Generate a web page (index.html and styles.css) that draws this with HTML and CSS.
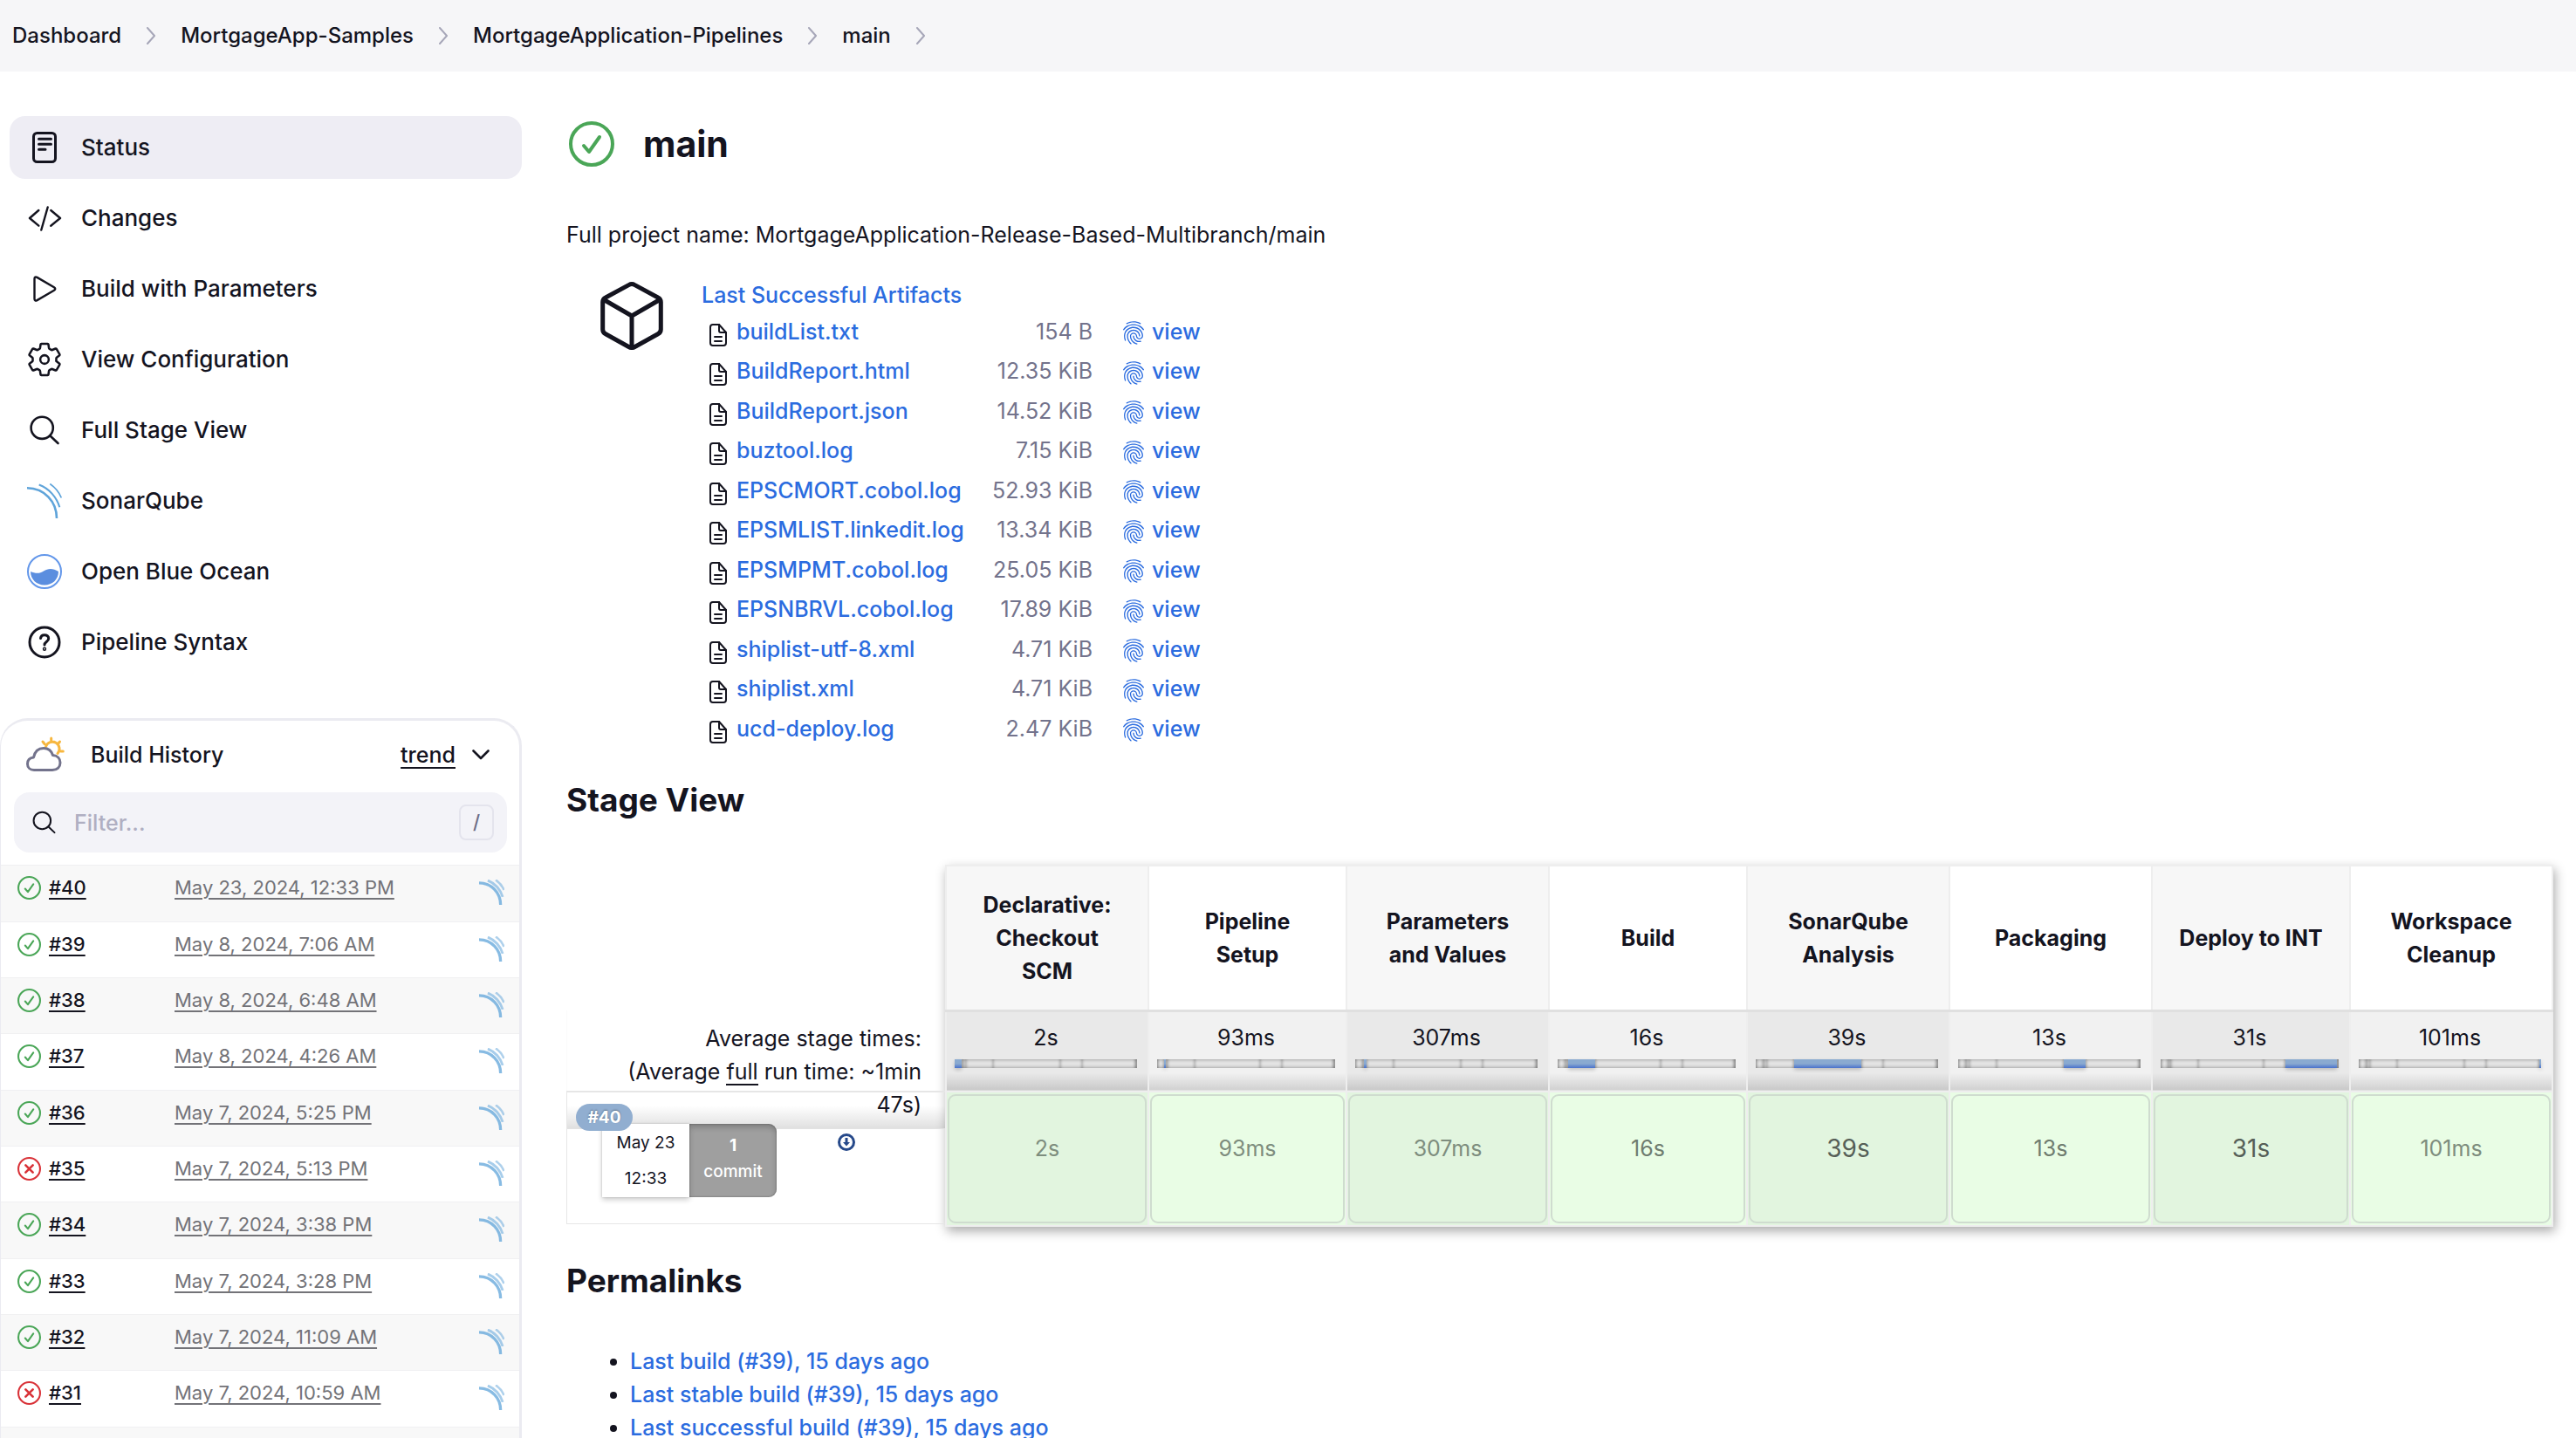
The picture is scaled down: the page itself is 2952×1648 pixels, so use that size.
FILE: index.html
```html
<!DOCTYPE html>
<html lang="en">
<head>
<meta charset="utf-8">
<title>main [Jenkins]</title>
<link rel="stylesheet" href="styles.css">
</head>
<body>
<svg class="sprite" aria-hidden="true">
  <symbol id="chevron" viewBox="0 0 12 20"><path d="M2 1l8 9-8 9" fill="none" stroke="#a6a6b8" stroke-width="2" stroke-linecap="round" stroke-linejoin="round"/></symbol>
  <symbol id="ok" viewBox="0 0 52 52"><g fill="none" stroke="#4aa657" stroke-width="4" stroke-linecap="round" stroke-linejoin="round"><circle cx="26" cy="26" r="24"/><path d="M17 28l6 7 12-17"/></g></symbol>
  <symbol id="fail" viewBox="0 0 52 52"><g fill="none" stroke="#d93238" stroke-width="4" stroke-linecap="round"><circle cx="26" cy="26" r="24"/><path d="M18 18l16 16M34 18L18 34" stroke-width="5"/></g></symbol>
  <symbol id="sonar" viewBox="0 0 40 40"><g fill="none" stroke="#5fa4da"><path d="M0 5.300C20 5.500 34 21 34 40" stroke-width="2.600"/><path d="M13.700 1.500C25 5.500 34 16 37.300 27.300" stroke-width="2.100"/><path d="M26.300.5C32 4.500 37 10.500 39.300 16.500" stroke-width="1.700"/></g></symbol>
  <symbol id="sonar-small" viewBox="0 0 40 40"><g fill="none" stroke="#5fa4da"><path d="M0 5.300C20 5.500 34 21 34 40" stroke-width="4.500" opacity=".75"/><path d="M13.700 1.500C25 5.500 34 16 37.300 27.300" stroke-width="4" opacity=".55"/><path d="M26.300.5C32 4.500 37 10.500 39.300 16.500" stroke-width="3.500" opacity=".5"/></g></symbol>
  <symbol id="search" viewBox="0 0 40 40"><g fill="none" stroke="#14141f" stroke-width="2.600" stroke-linecap="round"><circle cx="17.200" cy="17.300" r="12.600"/><path d="M26.500 26.500l9 8.500"/></g></symbol>
  <symbol id="file" viewBox="0 0 20 26"><g fill="none" stroke="#14141f" stroke-width="2" stroke-linecap="round" stroke-linejoin="round"><path d="M4 1h7l8 9v12a3 3 0 0 1-3 3H4a3 3 0 0 1-3-3V4a3 3 0 0 1 3-3z"/><path d="M11 1v7a2 2 0 0 0 2 2h6M6 15h8M6 20h8"/></g></symbol>
  <symbol id="finger" viewBox="3 2 18 20"><path fill="#2b6cdf" d="M17.810 4.470c-.08 0-.16-.02-.23-.06C15.660 3.420 14 3 12.010 3c-1.980 0-3.860.47-5.570 1.410-.24.13-.54.04-.68-.2-.13-.24-.04-.55.2-.68C7.820 2.520 9.860 2 12.010 2c2.130 0 3.990.47 6.030 1.520.25.13.34.43.21.67-.09.18-.26.28-.44.28zM3.500 9.720c-.1 0-.2-.03-.29-.09-.23-.16-.28-.47-.12-.7.99-1.400 2.250-2.500 3.750-3.270C9.980 4.040 14 4.030 17.150 5.650c1.500.77 2.760 1.860 3.750 3.250.16.22.11.54-.12.7-.23.16-.54.11-.7-.12-.9-1.260-2.040-2.250-3.390-2.940-2.870-1.470-6.540-1.470-9.400.01-1.360.7-2.500 1.700-3.400 2.960-.08.14-.23.21-.39.21zm6.250 12.070c-.13 0-.26-.05-.35-.15-.87-.87-1.340-1.430-2.010-2.640-.69-1.230-1.050-2.730-1.050-4.340 0-2.970 2.540-5.390 5.660-5.390s5.660 2.420 5.660 5.390c0 .28-.22.5-.5.5s-.5-.22-.5-.5c0-2.420-2.090-4.390-4.660-4.390-2.570 0-4.660 1.970-4.660 4.390 0 1.440.32 2.770.93 3.850.64 1.150 1.080 1.640 1.850 2.420.19.2.19.51 0 .71-.11.1-.24.15-.37.15zm7.170-1.850c-1.190 0-2.240-.3-3.100-.89-1.490-1.010-2.380-2.650-2.380-4.390 0-.28.22-.5.5-.5s.5.22.5.5c0 1.410.72 2.740 1.940 3.560.71.48 1.540.71 2.540.71.24 0 .64-.03 1.040-.1.27-.05.53.13.58.41.05.27-.13.53-.41.58-.57.11-1.070.12-1.210.12zM14.910 22c-.04 0-.09-.01-.13-.02-1.590-.44-2.630-1.030-3.720-2.100-1.400-1.390-2.170-3.240-2.170-5.220 0-1.620 1.380-2.940 3.080-2.940 1.700 0 3.080 1.320 3.080 2.940 0 1.070.93 1.940 2.080 1.940s2.080-.87 2.080-1.940c0-3.770-3.250-6.830-7.250-6.830-2.840 0-5.440 1.580-6.610 4.030-.39.81-.59 1.760-.59 2.800 0 .78.07 2.010.67 3.610.1.26-.03.55-.29.64-.26.1-.55-.04-.64-.29-.49-1.310-.73-2.610-.73-3.960 0-1.200.23-2.290.68-3.240 1.330-2.790 4.280-4.600 7.510-4.600 4.550 0 8.250 3.510 8.250 7.830 0 1.620-1.380 2.940-3.080 2.940s-3.080-1.320-3.080-2.940c0-1.070-.93-1.940-2.080-1.940s-2.080.87-2.080 1.940c0 1.710.66 3.310 1.870 4.510.95.94 1.860 1.460 3.270 1.850.27.07.42.35.35.61-.05.23-.26.38-.47.38z"/></symbol>
</svg>

<nav class="crumbs" aria-label="Breadcrumb">
  <a href="#">Dashboard</a><svg><use href="#chevron"/></svg>
  <a href="#">MortgageApp-Samples</a><svg><use href="#chevron"/></svg>
  <a href="#">MortgageApplication-Pipelines</a><svg><use href="#chevron"/></svg>
  <a href="#">main</a><svg><use href="#chevron"/></svg>
</nav>

<div class="page">
<aside class="side">
  <nav class="tasks">
    <a class="task active" href="#"><svg viewBox="0 0 40 40" class="line"><rect x="7.500" y="3.500" width="25" height="33" rx="4"/><path d="M13.500 10.300h14M13.500 16.300h14M13.500 22.300h7.500"/></svg>Status</a>
    <a class="task" href="#"><svg viewBox="0 0 40 40" class="line thin"><path d="M13.300 11L3 20l10.300 8.700M27.300 11L38 20l-10.700 8.700M23.700 7.500l-7.400 26"/></svg>Changes</a>
    <a class="task" href="#"><svg viewBox="0 0 40 40" class="line thin"><path d="M8.500 8.500v23c0 2 1.300 2.500 3 1.600l19.500-11.300c1.700-1 1.700-2.600 0-3.600L11.500 6.900c-1.700-.9-3-.4-3 1.600z"/></svg>Build with Parameters</a>
    <a class="task" href="#"><svg viewBox="18 18 476 476" class="gear"><circle cx="256" cy="256" r="58"/><path d="M416.390 256a154.340 154.340 0 01-1.530 20.790l45.210 35.460a10.810 10.810 0 012.450 13.750l-42.770 74a10.810 10.810 0 01-13.140 4.590l-44.900-18.080a16.110 16.110 0 00-15.170 1.750A164.480 164.480 0 01325 400.800a15.940 15.940 0 00-8.820 12.140l-6.730 47.890a11.080 11.080 0 01-10.680 9.170h-85.540a11.110 11.110 0 01-10.690-8.870l-6.720-47.820a16.070 16.070 0 00-9-12.220 155.300 155.300 0 01-21.460-12.570 16 16 0 00-15.110-1.710l-44.890 18.070a10.810 10.810 0 01-13.140-4.580l-42.770-74a10.800 10.800 0 012.450-13.750l38.210-30a16.050 16.050 0 006-14.080c-.36-4.170-.58-8.330-.58-12.500s.21-8.270.58-12.350a16 16 0 00-6.070-13.940l-38.190-30A10.810 10.810 0 0149.480 186l42.770-74a10.810 10.810 0 0113.140-4.590l44.900 18.080a16.110 16.110 0 0015.170-1.750A164.480 164.480 0 01187 111.200a15.940 15.940 0 008.820-12.140l6.730-47.890A11.080 11.080 0 01213.230 42h85.540a11.110 11.110 0 0110.690 8.870l6.720 47.820a16.070 16.070 0 009 12.220 155.300 155.300 0 0121.460 12.570 16 16 0 0015.110 1.710l44.890-18.070a10.810 10.810 0 0113.140 4.580l42.770 74a10.800 10.800 0 01-2.450 13.750l-38.210 30a16.050 16.050 0 00-6.050 14.080c.33 4.140.55 8.300.55 12.470z"/></svg>View Configuration</a>
    <a class="task" href="#"><svg><use href="#search"/></svg>Full Stage View</a>
    <a class="task" href="#"><svg><use href="#sonar"/></svg>SonarQube</a>
    <a class="task" href="#"><svg viewBox="0 0 40 40"><circle cx="20" cy="20" r="19" fill="none" stroke="#6397ea" stroke-width="2"/><path d="M4 20c5 2 10 3 15-.5s11-3.500 17 .5c0 9-7 15.500-16 15.500S4 29 4 20z" fill="#5b8edf"/></svg>Open Blue Ocean</a>
    <a class="task" href="#"><svg viewBox="0 0 40 40" class="line"><circle cx="20" cy="20" r="17"/><path d="M15.500 15.500c.3-2.600 2-3.800 4.500-3.800 2.600 0 4.700 1.500 4.700 4 0 3.800-4.700 3.800-4.700 7.300"/><circle cx="20" cy="27.700" r=".7"/></svg>Pipeline Syntax</a>
  </nav>

  <section class="history">
    <header class="history-head">
      <svg class="weather" viewBox="0 0 44 42"><g fill="none" stroke-width="3" stroke-linecap="round" stroke-linejoin="round"><path stroke="#f7b73f" d="M22.500 11.500a8 8 0 1 1 13.500 8M28.700 2v2.500M19 6l2 2.500M38.500 6l-2 2.500M40 17h2.300"/><path stroke="#73738c" d="M9 38.500C4.500 38.500 1.500 35.500 1.500 31.500c0-4 2.500-7 7-7.500C10 17 14 13.500 20 13.500c5.500 0 9 3 10.500 8 5.500.3 8.500 4 8.500 8.500 0 5-3.500 8.500-9 8.500z"/></g></svg>
      <span class="history-title">Build History</span>
      <a class="trend" href="#">trend</a>
      <svg class="caret" viewBox="0 0 20 12"><path d="M1.500 1.500L10 10l8.500-8.500" fill="none" stroke="#14141f" stroke-width="2.600" stroke-linecap="round" stroke-linejoin="round"/></svg>
    </header>
    <div class="filter">
      <svg><use href="#search"/></svg>
      <input type="search" placeholder="Filter..." aria-label="Filter builds">
      <kbd>/</kbd>
    </div>
    <table class="builds">
      <tr><td class="num"><svg><use href="#ok"/></svg><a href="#">#40</a></td><td class="date"><a href="#">May 23, 2024, 12:33 PM</a></td><td class="scan"><svg><use href="#sonar-small"/></svg></td></tr>
      <tr><td class="num"><svg><use href="#ok"/></svg><a href="#">#39</a></td><td class="date"><a href="#">May 8, 2024, 7:06 AM</a></td><td class="scan"><svg><use href="#sonar-small"/></svg></td></tr>
      <tr><td class="num"><svg><use href="#ok"/></svg><a href="#">#38</a></td><td class="date"><a href="#">May 8, 2024, 6:48 AM</a></td><td class="scan"><svg><use href="#sonar-small"/></svg></td></tr>
      <tr><td class="num"><svg><use href="#ok"/></svg><a href="#">#37</a></td><td class="date"><a href="#">May 8, 2024, 4:26 AM</a></td><td class="scan"><svg><use href="#sonar-small"/></svg></td></tr>
      <tr><td class="num"><svg><use href="#ok"/></svg><a href="#">#36</a></td><td class="date"><a href="#">May 7, 2024, 5:25 PM</a></td><td class="scan"><svg><use href="#sonar-small"/></svg></td></tr>
      <tr><td class="num"><svg><use href="#fail"/></svg><a href="#">#35</a></td><td class="date"><a href="#">May 7, 2024, 5:13 PM</a></td><td class="scan"><svg><use href="#sonar-small"/></svg></td></tr>
      <tr><td class="num"><svg><use href="#ok"/></svg><a href="#">#34</a></td><td class="date"><a href="#">May 7, 2024, 3:38 PM</a></td><td class="scan"><svg><use href="#sonar-small"/></svg></td></tr>
      <tr><td class="num"><svg><use href="#ok"/></svg><a href="#">#33</a></td><td class="date"><a href="#">May 7, 2024, 3:28 PM</a></td><td class="scan"><svg><use href="#sonar-small"/></svg></td></tr>
      <tr><td class="num"><svg><use href="#ok"/></svg><a href="#">#32</a></td><td class="date"><a href="#">May 7, 2024, 11:09 AM</a></td><td class="scan"><svg><use href="#sonar-small"/></svg></td></tr>
      <tr><td class="num"><svg><use href="#fail"/></svg><a href="#">#31</a></td><td class="date"><a href="#">May 7, 2024, 10:59 AM</a></td><td class="scan"><svg><use href="#sonar-small"/></svg></td></tr>
      <tr><td class="num"><svg><use href="#ok"/></svg></td><td class="date"></td><td class="scan"></td></tr>
    </table>
  </section>
</aside>

<main class="main">
  <h1><svg><use href="#ok"/></svg>main</h1>
  <p class="project">Full project name: MortgageApplication-Release-Based-Multibranch/main</p>

  <section class="artifacts">
    <svg class="cube" viewBox="0 0 72 78"><path d="M32.500 3.600a7 7 0 0 1 7 0L66 18a6 6 0 0 1 3.300 5.300v31A6 6 0 0 1 66 59.700L39.500 74.500a7 7 0 0 1-7 0L6 59.700a6 6 0 0 1-3.300-5.300v-31A6 6 0 0 1 6 18zM4 20.500l32 18.500 32-18.500M36 39v36" fill="none" stroke="#14141f" stroke-width="5" stroke-linejoin="round"/></svg>
    <div>
      <a class="artifacts-title" href="#">Last Successful Artifacts</a>
      <table class="files">
        <tr><td><svg class="doc"><use href="#file"/></svg></td><td><a href="#">buildList.txt</a></td><td class="size">154 B</td><td><a class="view" href="#"><svg><use href="#finger"/></svg>view</a></td></tr>
        <tr><td><svg class="doc"><use href="#file"/></svg></td><td><a href="#">BuildReport.html</a></td><td class="size">12.35 KiB</td><td><a class="view" href="#"><svg><use href="#finger"/></svg>view</a></td></tr>
        <tr><td><svg class="doc"><use href="#file"/></svg></td><td><a href="#">BuildReport.json</a></td><td class="size">14.52 KiB</td><td><a class="view" href="#"><svg><use href="#finger"/></svg>view</a></td></tr>
        <tr><td><svg class="doc"><use href="#file"/></svg></td><td><a href="#">buztool.log</a></td><td class="size">7.15 KiB</td><td><a class="view" href="#"><svg><use href="#finger"/></svg>view</a></td></tr>
        <tr><td><svg class="doc"><use href="#file"/></svg></td><td><a href="#">EPSCMORT.cobol.log</a></td><td class="size">52.93 KiB</td><td><a class="view" href="#"><svg><use href="#finger"/></svg>view</a></td></tr>
        <tr><td><svg class="doc"><use href="#file"/></svg></td><td><a href="#">EPSMLIST.linkedit.log</a></td><td class="size">13.34 KiB</td><td><a class="view" href="#"><svg><use href="#finger"/></svg>view</a></td></tr>
        <tr><td><svg class="doc"><use href="#file"/></svg></td><td><a href="#">EPSMPMT.cobol.log</a></td><td class="size">25.05 KiB</td><td><a class="view" href="#"><svg><use href="#finger"/></svg>view</a></td></tr>
        <tr><td><svg class="doc"><use href="#file"/></svg></td><td><a href="#">EPSNBRVL.cobol.log</a></td><td class="size">17.89 KiB</td><td><a class="view" href="#"><svg><use href="#finger"/></svg>view</a></td></tr>
        <tr><td><svg class="doc"><use href="#file"/></svg></td><td><a href="#">shiplist-utf-8.xml</a></td><td class="size">4.71 KiB</td><td><a class="view" href="#"><svg><use href="#finger"/></svg>view</a></td></tr>
        <tr><td><svg class="doc"><use href="#file"/></svg></td><td><a href="#">shiplist.xml</a></td><td class="size">4.71 KiB</td><td><a class="view" href="#"><svg><use href="#finger"/></svg>view</a></td></tr>
        <tr><td><svg class="doc"><use href="#file"/></svg></td><td><a href="#">ucd-deploy.log</a></td><td class="size">2.47 KiB</td><td><a class="view" href="#"><svg><use href="#finger"/></svg>view</a></td></tr>
      </table>
    </div>
  </section>

  <h2 class="stage-title">Stage View</h2>
  <section class="stage">
    <div class="runs">
      <div class="summary">Average stage times:<br>(Average <span class="full">full</span> run time: ~1min 47s)</div>
      <div class="run">
        <span class="badge">#40</span>
        <div class="when"><span>May 23</span><span>12:33</span></div>
        <div class="commits"><b>1</b><span>commit</span></div>
        <svg class="download" viewBox="0 0 20 20"><circle cx="10" cy="10" r="8.500" fill="none" stroke="#26498a" stroke-width="3"/><path d="M8.500 5h3v5h2.500l-4 4.500L6 10h2.500z" fill="#26498a"/></svg>
      </div>
    </div>
    <table class="grid">
      <colgroup><col class="wide"><col class="narrow"><col class="wide"><col class="narrow"><col class="wide"><col class="wide"><col class="narrow"><col class="wide"></colgroup>
      <thead><tr><th>Declarative: Checkout SCM</th><th>Pipeline Setup</th><th>Parameters and Values</th><th>Build</th><th>SonarQube Analysis</th><th>Packaging</th><th>Deploy to INT</th><th>Workspace Cleanup</th></tr></thead>
      <tbody>
        <tr class="avg">
          <td>2s<div class="bar"><i class="on"></i><i></i><i></i><i></i><i></i><i></i><i></i><i></i></div></td>
          <td>93ms<div class="bar"><i></i><i class="on"></i><i></i><i></i><i></i><i></i><i></i><i></i></div></td>
          <td>307ms<div class="bar"><i></i><i></i><i class="on"></i><i></i><i></i><i></i><i></i><i></i></div></td>
          <td>16s<div class="bar"><i></i><i></i><i></i><i class="on"></i><i></i><i></i><i></i><i></i></div></td>
          <td>39s<div class="bar"><i></i><i></i><i></i><i></i><i class="on"></i><i></i><i></i><i></i></div></td>
          <td>13s<div class="bar"><i></i><i></i><i></i><i></i><i></i><i class="on"></i><i></i><i></i></div></td>
          <td>31s<div class="bar"><i></i><i></i><i></i><i></i><i></i><i></i><i class="on"></i><i></i></div></td>
          <td>101ms<div class="bar"><i></i><i></i><i></i><i></i><i></i><i></i><i></i><i class="on"></i></div></td>
        </tr>
        <tr class="cells">
          <td><div>2s</div></td><td><div>93ms</div></td><td><div>307ms</div></td><td><div class="mid">16s</div></td><td><div class="long">39s</div></td><td><div class="mid">13s</div></td><td><div class="long">31s</div></td><td><div>101ms</div></td>
        </tr>
      </tbody>
    </table>
  </section>

  <h2 class="perma-title">Permalinks</h2>
  <ul class="perma">
    <li><a href="#">Last build (#39), 15 days ago</a></li>
    <li><a href="#">Last stable build (#39), 15 days ago</a></li>
    <li><a href="#">Last successful build (#39), 15 days ago</a></li>
  </ul>
</main>
</div>
</body>
</html>
```

FILE: styles.css
```css
* { box-sizing: border-box; }
body {
  margin: 0;
  height: 100vh;
  display: flex;
  flex-direction: column;
  overflow: hidden;
  background: #fff;
  color: #14141f;
  font: 25px/38px Inter, "Liberation Sans", sans-serif;
}
a { color: inherit; text-decoration: none; }
svg { display: block; flex: none; }
table { border-collapse: collapse; border-spacing: 0; }
td, th { padding: 0; }
.sprite { position: absolute; width: 0; height: 0; }

/* breadcrumb bar */
.crumbs {
  display: flex;
  flex: none;
  align-items: center;
  gap: 28px;
  height: 82px;
  padding: 0 14px;
  background: #f6f6f8;
  font-size: 24px;
  font-weight: 500;
}
.crumbs svg { width: 12px; height: 20px; }

.page { display: flex; flex: 1; min-height: 0; }

/* side panel */
.side { flex: none; width: 598px; padding-top: 51px; overflow: hidden; }
.tasks { display: flex; flex-direction: column; gap: 9px; padding-left: 11px; }
.task {
  display: flex;
  align-items: center;
  gap: 22px;
  height: 72px;
  padding-left: 20px;
  border-radius: 18px;
  font-size: 26px;
  font-weight: 500;
}
.task.active { background: #eeedf4; }
.task svg { width: 40px; height: 40px; }
.line { fill: none; stroke: #14141f; stroke-width: 3; stroke-linecap: round; stroke-linejoin: round; }
.thin { stroke-width: 2.4; }
.gear { fill: none; stroke: #14141f; stroke-width: 30; stroke-linejoin: round; }

.history {
  margin-top: 51px;
  border: solid #ebebf1;
  border-width: 3px 3px 0 1px;
  border-radius: 32px 32px 0 0;
  overflow: hidden;
}
.history-head { display: flex; align-items: center; height: 78px; margin-bottom: 4px; padding: 0 34px 0 29px; font-weight: 500; }
.weather { width: 44px; height: 42px; }
.history-title { flex: 1; margin-left: 30px; }
.trend { text-decoration: underline; text-decoration-thickness: 2px; text-underline-offset: 5px; }
.caret { width: 20px; height: 12px; margin-left: 19px; }
.filter {
  display: flex;
  align-items: center;
  height: 69px;
  margin: 0 14px 14px 15px;
  padding: 0 15px 0 19px;
  border-radius: 18px;
  background: #f3f3f8;
}
.filter svg { width: 31px; height: 31px; }
.filter input {
  flex: 1;
  min-width: 0;
  margin-left: 19px;
  padding: 0;
  border: 0;
  background: none;
  color: inherit;
  font: inherit;
  font-weight: 500;
}
.filter input::placeholder { color: #b0afc2; opacity: 1; }
.filter kbd {
  width: 40px;
  height: 41px;
  border: 2px solid #e4e4ed;
  border-radius: 8px;
  color: #6d6d86;
  font: 500 22px/37px Inter, sans-serif;
  text-align: center;
}
.builds { width: 100%; table-layout: fixed; font-size: 22px; line-height: 26px; }
.builds tr { height: 64px; border-top: 1px solid #f0f0f2; }
.builds tr:nth-child(3n+1) { height: 65px; }
.builds tr:nth-child(odd) { background: #f8f8f8; }
.builds td { vertical-align: top; padding-top: 12px; }
.num { width: 199px; font-weight: 500; }
.num svg { float: left; width: 27px; height: 27px; margin: 0 9px 0 19px; }
.builds a { text-decoration: underline; text-decoration-thickness: 2px; text-underline-offset: 4px; }
.date { color: #737378; }
.scan { width: 46px; }
.builds .scan { padding-top: 16px; }
.scan svg { width: 29px; height: 29px; }

/* main column */
.main { flex: 1; min-width: 0; padding: 57px 27px 0 51px; overflow: hidden; }
h1, h2, p { margin: 0; }
h1 { display: flex; align-items: center; gap: 32px; padding-left: 2px; font-size: 41px; line-height: 52px; }
h1 svg { width: 54px; height: 52px; }
h2 { font-size: 37px; line-height: 56px; }
.project { margin-top: 59px; }
.artifacts { display: flex; gap: 44px; margin: 31px 0 0 39px; }
.cube { width: 72px; height: 78px; margin-top: 4px; }
.artifacts a, .perma a { color: #2b6cdf; font-weight: 500; }
.artifacts-title { display: block; }
.files { table-layout: fixed; width: 572px; }
.files tr { height: 46px; }
.files tr:nth-child(odd) { height: 45px; }
.files td:nth-child(1) { width: 40px; }
.files td:nth-child(2) { width: 270px; }
.files td:nth-child(3) { width: 138px; }
.files .doc { width: 20px; height: 26px; margin: 8px 0 0 9px; }
.size { color: #73738c; text-align: right; }
.view { display: flex; align-items: center; gap: 9px; margin-left: 35px; }
.view svg { width: 24px; height: 27px; margin-top: 4px; }

/* stage view */
.stage-title { margin-top: 32px; }
.stage { display: flex; margin-top: 46px; }
.runs { width: 434px; flex: none; padding-top: 167px; }
.summary {
  position: relative;
  height: 136px;
  margin-bottom: -44px;
  padding: 13px 27px 0 20px;
  border-left: 1px solid #fafafa;
  border-bottom: 1px solid #e2e2e2;
  background: linear-gradient(transparent 109px, #0000001f);
  text-align: right;
}
.full { border-bottom: 2px solid #14141f; line-height: 28px; display: inline-block; }
.run {
  position: relative;
  display: flex;
  height: 153px;
  padding: 36px 0 0 40px;
  border: solid #e6e6e6;
  border-width: 2px 0 1px 1px;
  font-size: 19px;
}
.badge {
  position: absolute;
  z-index: 2;
  left: 10px;
  top: 13px;
  width: 65px;
  border-radius: 16px;
  background: #91aed0;
  color: #fff;
  font-size: 19px;
  font-weight: 700;
  line-height: 31px;
  text-align: center;
  text-shadow: 0 -1px 2px #0005;
}
.when, .commits { position: relative; z-index: 1; width: 100px; height: 84px; text-align: center; }
.when { display: grid; line-height: 40px; padding-top: 2px; background: #fff; box-shadow: 0 3px 6px #0003, 0 0 2px #0003; }
.commits {
  display: flex;
  flex-direction: column;
  padding-top: 10px;
  border-radius: 0 9px 9px 0;
  background: #9f9f9f;
  box-shadow: inset 0 4px 6px #0003, inset 0 0 2px #0006;
  color: #fff;
  font-weight: 500;
  line-height: 30px;
}
.download { width: 20px; height: 20px; margin: 11px 0 0 70px; }

.grid { flex: 1; table-layout: fixed; width: 0; border: 2px solid #eee; box-shadow: 2px 5px 12px #0005; text-align: center; }
.wide { width: 232px; }
.narrow { width: 227px; }
.grid th, .grid td { border-right: 2px solid #eee; }
.grid th { height: 166px; padding: 0 26px; background: #fff; }
.grid th:nth-child(odd) { background: #f7f7f7; }
.avg td {
  height: 93px;
  padding: 10px 12px 0 9px;
  border-top: 3px solid #e0e0e0;
  background: linear-gradient(#f1f1f1 70px, #d0d0d0);
  vertical-align: top;
}
.avg td:nth-child(odd) { background: linear-gradient(#e9e9e9 70px, #c8c8c8); }
.bar { display: flex; height: 10px; margin-top: 6px; background: #e4e4e4; box-shadow: inset 0 0 4px #0006; }
.bar i { box-shadow: inset 3px 0 3px -2px #0003, inset -3px 0 3px -2px #0003; }
.bar i:nth-child(1) { width: 4%; }
.bar i:nth-child(2), .bar i:nth-child(3), .bar i:nth-child(8) { width: 1%; }
.bar i:nth-child(4) { width: 15%; }
.bar i:nth-child(5) { width: 37%; }
.bar i:nth-child(6) { width: 12%; }
.bar i:nth-child(7) { width: 29%; }
.bar .on { background: linear-gradient(#8aaad0 50%, #4a72cc); box-shadow: 0 2px 4px #0003; }
.cells td { height: 153px; padding: 2px 1px; background: #e9fde5; border-top: 2px solid #eee; }
.cells td:nth-child(odd) { background: #e2f5df; }
.cells div {
  height: 148px;
  padding-top: 41px;
  border: 2px solid #cfdccf;
  border-radius: 9px;
  color: #7e8d7e;
}
.cells .mid { color: #6f7c6f; }
.cells .long { color: #565f58; font-size: 28px; }

/* permalinks */
.perma-title { margin-top: 34px; }
.perma { margin: 45px 0 0; padding-left: 73px; }
```
